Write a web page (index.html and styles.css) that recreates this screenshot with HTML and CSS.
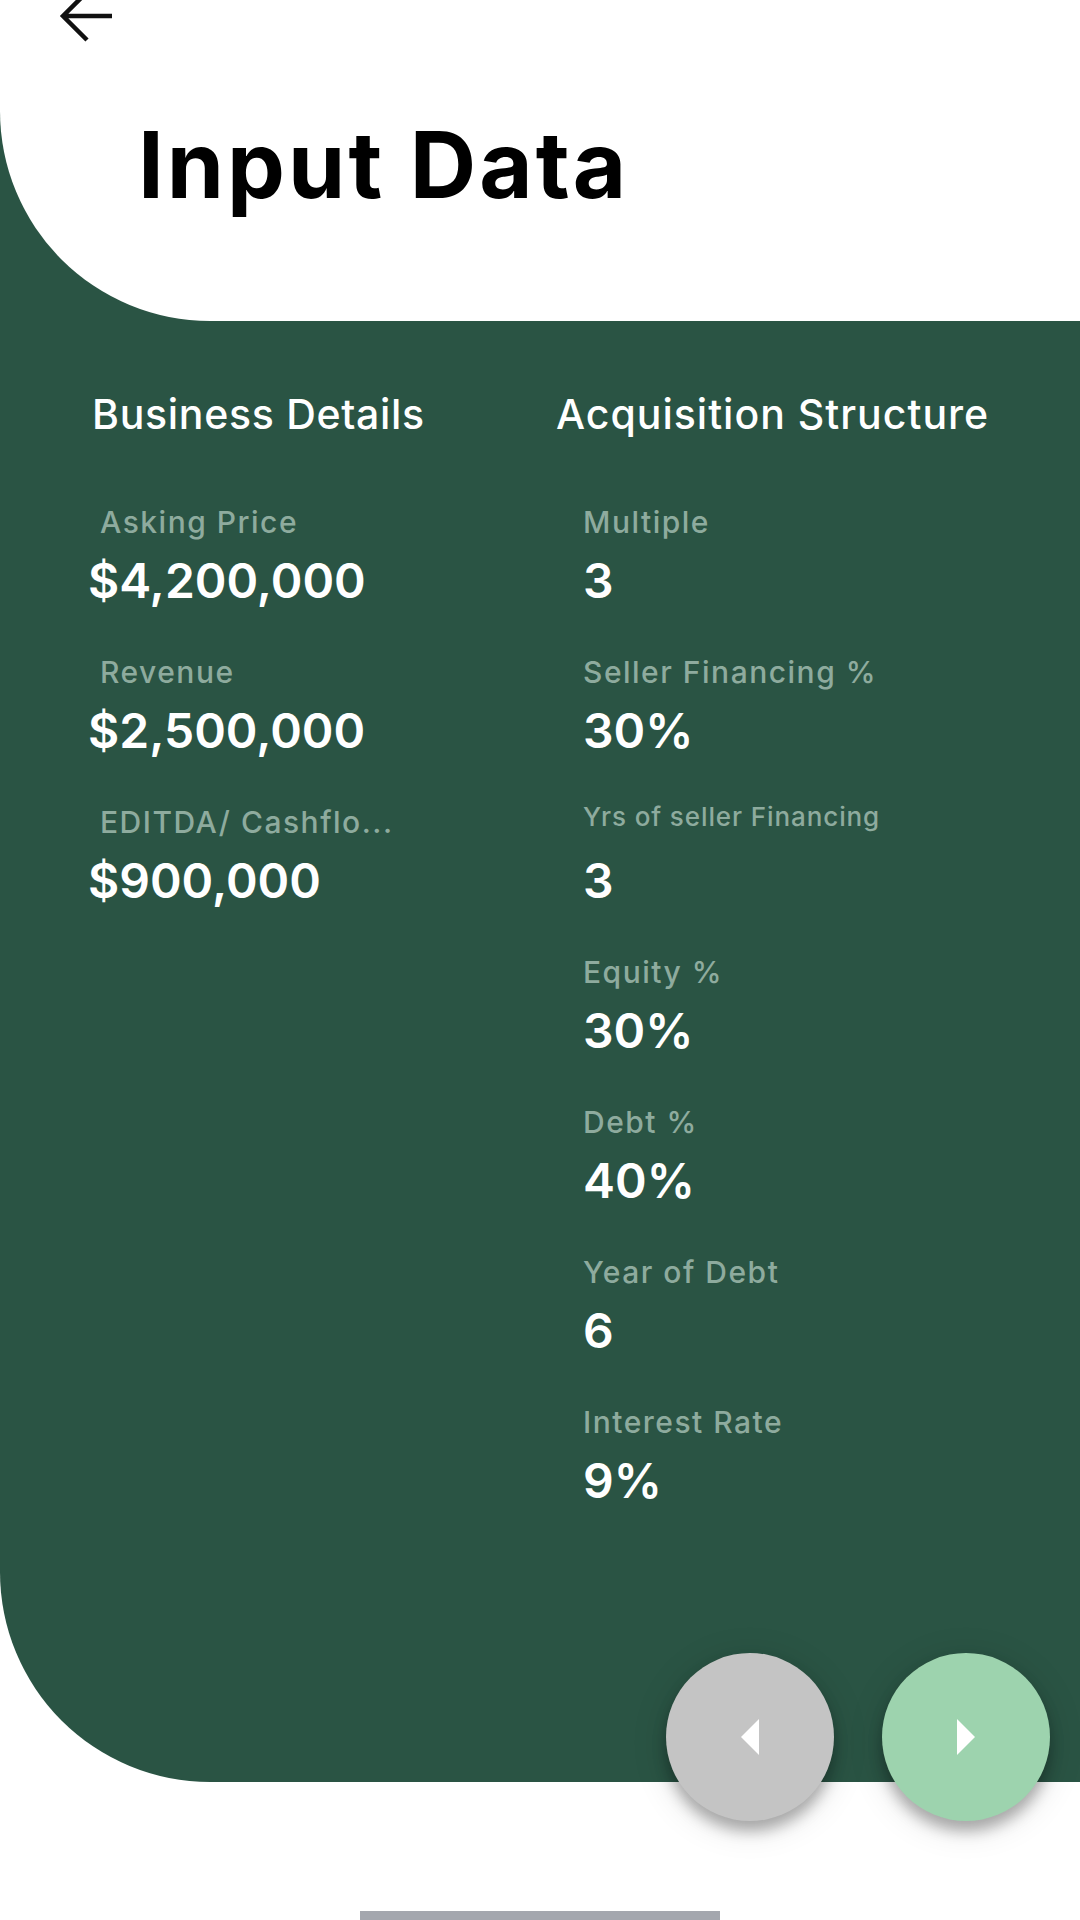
FILE: index.html
```html
<!DOCTYPE html>
<html lang="en">
<head>
<meta charset="utf-8">
<title>Input Data</title>
<link rel="stylesheet" href="styles.css">
</head>
<body>
<div class="screen">
  <div class="main">
    <header class="header">
      <svg class="back" viewBox="0 0 56 56" width="56" height="56" aria-hidden="true">
        <path d="M5 28 H54 M29 4 L5 28 L29 52" fill="none" stroke="#111" stroke-width="4.5"/>
      </svg>
      <h1 class="title">Input Data</h1>
    </header>
    <section class="content">
      <div class="col col-left">
        <h2 class="col-title">Business Details</h2>
        <div class="item"><div class="label">Asking Price</div><div class="value">$4,200,000</div></div>
        <div class="item"><div class="label">Revenue</div><div class="value">$2,500,000</div></div>
        <div class="item"><div class="label">EDITDA/ Cashflo...</div><div class="value">$900,000</div></div>
      </div>
      <div class="col col-right">
        <h2 class="col-title">Acquisition Structure</h2>
        <div class="item"><div class="label">Multiple</div><div class="value">3</div></div>
        <div class="item"><div class="label">Seller Financing %</div><div class="value">30%</div></div>
        <div class="item"><div class="label small">Yrs of seller Financing</div><div class="value">3</div></div>
        <div class="item"><div class="label">Equity %</div><div class="value">30%</div></div>
        <div class="item"><div class="label">Debt %</div><div class="value">40%</div></div>
        <div class="item"><div class="label">Year of Debt</div><div class="value">6</div></div>
        <div class="item"><div class="label">Interest Rate</div><div class="value">9%</div></div>
      </div>
    </section>
    <div class="fabs">
      <button class="fab fab-prev" aria-label="Previous">
        <svg viewBox="0 0 18 36" width="18" height="36"><path d="M18 0 V36 L0 18 Z" fill="#fff"/></svg>
      </button>
      <button class="fab fab-next" aria-label="Next">
        <svg viewBox="0 0 18 36" width="18" height="36"><path d="M0 0 V36 L18 18 Z" fill="#fff"/></svg>
      </button>
    </div>
  </div>
  <footer class="footer"><div class="home-bar"></div></footer>
</div>
</body>
</html>
```

FILE: styles.css
```css
* { box-sizing: border-box; }
html, body { margin: 0; padding: 0; }
body {
  width: 1080px;
  height: 1920px;
  overflow: hidden;
  background: #ffffff;
  font-family: Inter, "Noto Sans", sans-serif;
}
.screen {
  height: 1920px;
  display: flex;
  flex-direction: column;
}
.main {
  position: relative;
  height: 1782px;
  flex: none;
  background: #2a5444;
  border-bottom-left-radius: 210px;
}
.header {
  height: 321px;
  background: #ffffff;
  border-bottom-left-radius: 210px;
  overflow: hidden;
}
.back {
  display: block;
  margin: -12px 0 0 58px;
}
.title {
  margin: 66px 0 0 138px;
  font-size: 92px;
  line-height: 110px;
  font-weight: 700;
  letter-spacing: 3px;
  color: #000;
}
.content {
  display: grid;
  grid-template-columns: 464px 1fr;
  padding: 68px 0 0 92px;
}
.col-title {
  margin: 0 0 63px 0;
  font-size: 41px;
  line-height: 50px;
  font-weight: 500;
  letter-spacing: 0.7px;
  color: #ffffff;
}
.col-right .col-title { letter-spacing: 1px; }
.col-right .item { padding-left: 27px; }
.col-left .label { padding-left: 8px; }
.col-left .value { margin-left: -4px; }
.item {
  height: 150px;
}
.label {
  font-size: 30px;
  line-height: 40px;
  font-weight: 500;
  letter-spacing: 1.5px;
  color: #8eab9e;
  margin-bottom: 11px;
  white-space: nowrap;
}
.label.small {
  font-size: 26px;
  line-height: 30px;
  letter-spacing: 0.9px;
  margin-bottom: 21px;
}
.value {
  font-size: 48px;
  line-height: 56px;
  font-weight: 600;
  color: #ffffff;
}
.fabs {
  position: absolute;
  top: 1653px;
  right: 30px;
  display: flex;
  gap: 48px;
}
.fab {
  width: 168px;
  height: 168px;
  border: 0;
  padding: 0;
  border-radius: 50%;
  display: flex;
  align-items: center;
  justify-content: center;
  box-shadow: 0 10px 14px rgba(0,0,0,0.28), 0 6px 36px rgba(0,0,0,0.14);
}
.fab-prev { background: #c4c4c4; }
.fab-next { background: #9dd3ae; }
.fab svg { display: block; }
.footer {
  flex: 1;
  display: flex;
  justify-content: center;
  align-items: flex-end;
}
.home-bar {
  width: 360px;
  height: 9px;
  background: #a4a7ae;
}
```
